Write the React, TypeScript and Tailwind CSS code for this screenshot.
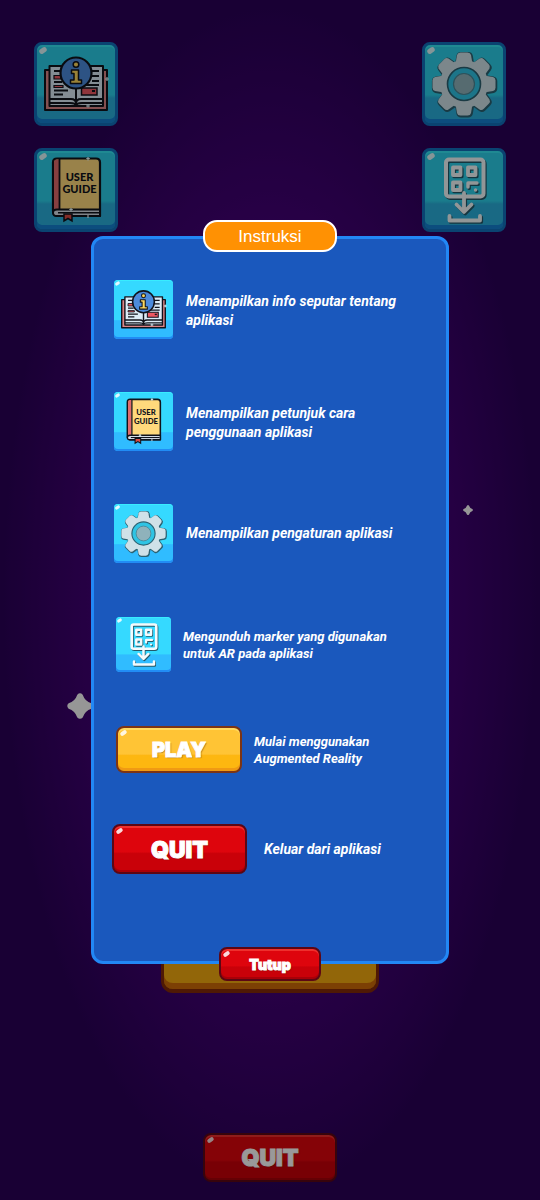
import React from "react";
import type { ReactNode } from "react";

function InfoIcon() {
  return (
    <svg viewBox="0 0 84 84" className="size-full" aria-hidden="true">
      <path d="M11 28h62v40H11z" fill="#dd8587" stroke="#10131c" strokeWidth="2" strokeLinejoin="round" />
      <path d="M15.500 24H37q5 0 5 4 0-4 5-4h22v40H15.500z" fill="#dcecf7" stroke="#10131c" strokeWidth="2" strokeLinejoin="round" />
      <path d="M15.500 57H37q5 0 5 4.500 0-4.500 5-4.500h22M15.500 61H36q6 0 6 3 0-3 6-3h21M42 30v34" fill="none" stroke="#10131c" strokeWidth="2" />
      <path d="M20 29h9M20 40h8M20 48.500h14M20 52.500h9M56 29h9M58 34h7M58 39h7M46 43h19" stroke="#10131c" strokeWidth="1.800" />
      <path d="M20 33.500h7v3.500h-7zM20 43.500h9v2h-9z" fill="#ee5963" stroke="#10131c" strokeWidth="1.200" />
      <path d="M47.500 46h15.500v7H47.500z" fill="#ee5963" stroke="#10131c" strokeWidth="1.500" />
      <path d="M58 48h3v2h-3z" fill="#10131c" />
      <circle cx="42" cy="31" r="15.500" fill="#4c8bdc" stroke="#10131c" strokeWidth="2.200" />
      <path d="M51 20a14 14 0 0 1-15 24 14 14 0 0 0 15-24z" fill="#3c72c4" />
      <circle cx="42" cy="22.500" r="2.800" fill="#ffd95c" stroke="#10131c" strokeWidth="1.500" />
      <path d="M37.500 28h7v10h3v3.500h-11V38h3.500v-6.500h-2.500z" fill="#ffd95c" stroke="#10131c" strokeWidth="1.500" strokeLinejoin="round" />
      <path d="M73 35v4M71 37h4M54 62v3.500M52 64h4" stroke="#dff8ff" strokeWidth="1.200" />
    </svg>
  );
}

function GuideIcon() {
  return (
    <svg viewBox="0 0 84 84" className="size-full" aria-hidden="true">
      <path d="M23 10.500h39q4 0 4 4V68H23q-4-1-4-5V14.500q0-4 4-4z" fill="#ffd97c" stroke="#10131c" strokeWidth="2.200" strokeLinejoin="round" />
      <path d="M20 14.500q0-3 3-3h2V63h-5z" fill="#e06a6c" />
      <path d="M25.500 10.500V62" stroke="#10131c" strokeWidth="1.800" />
      <path d="M66 61.500H23q-4 0-4 3.300t4 3.200h43z" fill="#d5dce6" stroke="#10131c" strokeWidth="2" strokeLinejoin="round" />
      <path d="M24 64.800h41" stroke="#10131c" strokeWidth="1.500" />
      <path d="M30 66h8v7l-4-2.500-4 2.500z" fill="#dc4a44" stroke="#10131c" strokeWidth="1.500" />
      <path d="M54 9v3.500M52.300 10.500h3.500M37 60v3.500M35.300 61.500h3.500M54 67v3" stroke="#e8fbff" strokeWidth="1.200" />
      <text x="45.500" y="33" textAnchor="middle" fontFamily="Lato, sans-serif" fontWeight="900" fontSize="11" fill="#10131c">USER</text>
      <text x="45.500" y="45" textAnchor="middle" fontFamily="Lato, sans-serif" fontWeight="900" fontSize="11" fill="#10131c">GUIDE</text>
    </svg>
  );
}

const TEETH = [0, 45, 90, 135, 180, 225, 270, 315];
const TOOTH = "M33.500 22l1.500-9q.6-2.500 3.500-2.500h7q2.900 0 3.500 2.500l1.500 9z";

function GearIcon() {
  return (
    <svg viewBox="0 0 84 84" className="size-full" aria-hidden="true">
      <g transform="translate(0.600 0.800)" fill="#2c6272" stroke="#2c6272" strokeWidth="2.400">
        <circle cx="42" cy="42" r="23" />
        {TEETH.map((a) => <path key={a} d={TOOTH} transform={`rotate(${a} 42 42)`} />)}
      </g>
      <g fill="#cfe1e8">
        <circle cx="42" cy="42" r="24" />
        {TEETH.map((a) => <path key={a} d={TOOTH} transform={`rotate(${a} 42 42)`} />)}
      </g>
      <circle cx="42" cy="42" r="16.500" fill="#2fc4e4" stroke="#2c6272" strokeWidth="1.600" />
      <circle cx="42" cy="42" r="10.500" fill="#8fb2bb" stroke="#4b8796" strokeWidth="1.200" />
    </svg>
  );
}

function QrGlyph() {
  return (
    <>
      <rect x="24" y="11.500" width="37.500" height="37" rx="3" strokeWidth="4" />
      <path d="M31 19.500h7.500v7.500H31zM46 19.500h7.500v7.500H46zM31 34.500h7.500v7.500H31z" strokeWidth="3.800" />
      <path d="M46 39v-4h9M53.500 42h.1" strokeWidth="3.400" />
      <path d="M42 45v18M34.500 56.500l7.500 7.500 7.500-7.500" strokeWidth="3.800" />
      <path d="M27.500 68v4.500H58V68" strokeWidth="3.800" />
    </>
  );
}

function QrIcon() {
  return (
    <svg viewBox="0 0 84 84" className="size-full" aria-hidden="true" fill="none" strokeLinecap="round" strokeLinejoin="round">
      <g stroke="#24596a" transform="translate(1.200 1.400)"><QrGlyph /></g>
      <g stroke="#f4fafc"><QrGlyph /></g>
    </svg>
  );
}

function Gloss({ className }: { className: string }) {
  return <span className={`absolute -rotate-[35deg] rounded-full bg-white/85 ${className}`} />;
}

function MenuTile({ label, children }: { label: string; children: ReactNode }) {
  return (
    <button
      type="button"
      aria-label={label}
      className="relative size-[84px] rounded-lg border-3 border-[#1270bd] bg-linear-to-b from-[#2ccfe9] from-64% to-[#2ab0dc] to-68% shadow-[inset_0_-4px_0_#1480d2,inset_0_2px_0_#35e4f4]"
    >
      <Gloss className="left-[2px] top-[3px] h-[5px] w-2" />
      <span className="absolute -inset-[3px]">{children}</span>
    </button>
  );
}

function PanelTile({ small = false, children }: { small?: boolean; children: ReactNode }) {
  return (
    <span
      className={`relative block shrink-0 rounded-sm bg-linear-to-b from-[#35d9ff] from-67% to-[#30bcff] to-69% shadow-[inset_0_-2px_0_#218cf5,inset_0_1px_0_#38ecff] ${small ? "size-[55px]" : "size-[59px]"}`}
    >
      <Gloss className="left-px top-[2px] h-[3px] w-[5px]" />
      {children}
    </span>
  );
}

const RED = "border-[#5c0714] bg-linear-to-b from-[#de050d] from-56% to-[#c90109] to-60% shadow-[inset_0_2px_0_#ee302d,inset_0_-2px_0_#a90008]";
const YELLOW = "border-[#7c3414] bg-linear-to-b from-[#ffc435] from-60% to-[#fdb710] to-64% shadow-[inset_0_2px_0_#ffdb62,inset_0_-3px_0_#f09a13]";

function GameButton({ tone, className, children }: { tone: "red" | "yellow"; className: string; children: ReactNode }) {
  return (
    <button
      type="button"
      className={`relative shrink-0 rounded-lg border-2 pt-0.5 text-center font-['Inter',sans-serif] font-black text-white ${tone === "red" ? RED : YELLOW} ${className}`}
    >
      <Gloss className="left-[2px] top-[3px] h-1 w-[7px]" />
      <span className="[-webkit-text-stroke:1px_white] [text-shadow:1px_1px_1px_#55200088]">{children}</span>
    </button>
  );
}

function Row({ className, textClass, text, children }: { className: string; textClass: string; text: string; children: ReactNode }) {
  return (
    <li className={`flex items-center ${className}`}>
      {children}
      <p className={`whitespace-pre-line font-['Roboto',sans-serif] font-bold italic text-white ${textClass}`}>{text}</p>
    </li>
  );
}

function Star({ className }: { className: string }) {
  return (
    <svg viewBox="0 0 24 24" className={`absolute fill-[#fbfbfb] ${className}`} aria-hidden="true">
      <path d="M9.500 1.500q2.500-2.500 5 0 2 6 8 8 2.500 2.500 0 5-6 2-8 8-2.500 2.500-5 0-2-6-8-8-2.500-2.500 0-5 6-2 8-8z" />
    </svg>
  );
}

export default function App() {
  return (
    <div className="relative min-h-screen overflow-hidden bg-[radial-gradient(farthest-side,#4e0084,#48007c_55%,#2a0057)] font-['Liberation_Sans',sans-serif]">
      <Star className="left-[67px] top-[693px] size-[26px]" />
      <Star className="left-[463px] top-[505px] size-[10px]" />
      <main className="flex min-h-screen flex-col items-center pb-[18px] pt-[42px]">
        <nav className="flex w-full justify-between px-[34px]">
          <div className="flex flex-col gap-[22px]">
            <MenuTile label="Info"><InfoIcon /></MenuTile>
            <MenuTile label="User guide"><GuideIcon /></MenuTile>
          </div>
          <div className="flex flex-col gap-[22px]">
            <MenuTile label="Pengaturan"><GearIcon /></MenuTile>
            <MenuTile label="Unduh marker"><QrIcon /></MenuTile>
          </div>
        </nav>
        <button
          type="button"
          aria-label="Play"
          className="mt-auto h-[72px] w-[218px] rounded-xl border-3 border-b-4 border-[#842a08] bg-[#f4ab10] shadow-[inset_0_-6px_0_#cf6c08]"
        />
        <GameButton tone="red" className="mt-[140px] h-[49px] w-[134px] text-[23px]">QUIT</GameButton>
      </main>

      <div className="absolute inset-0 flex items-center bg-black/40 px-[91px]">
        <section role="dialog" aria-labelledby="panel-title" className="relative w-full rounded-xl border-3 border-[#2287f5] bg-[#1a58bd] pb-[87px] pt-[39px]">
          <h1
            id="panel-title"
            className="absolute -top-[19px] left-1/2 h-8 w-[134px] -translate-x-1/2 rounded-[14px] border-2 border-white bg-[#ff9103] text-center text-[17px] leading-[30px] text-white"
          >
            Instruksi
          </h1>
          <ul className="flex flex-col gap-[50px]">
            <Row className="h-[62px] gap-[13px] px-5" textClass="pt-1 text-sm leading-[19px]" text={"Menampilkan info seputar tentang\naplikasi"}>
              <PanelTile><InfoIcon /></PanelTile>
            </Row>
            <Row className="h-[62px] gap-[13px] px-5" textClass="pt-1 text-sm leading-[19px]" text={"Menampilkan petunjuk cara\npenggunaan aplikasi"}>
              <PanelTile><GuideIcon /></PanelTile>
            </Row>
            <Row className="h-[62px] gap-[13px] px-5" textClass="text-sm leading-[19px]" text="Menampilkan pengaturan aplikasi">
              <PanelTile><GearIcon /></PanelTile>
            </Row>
            <Row className="h-[60px] gap-3 px-[22px]" textClass="pt-0.5 text-[13px] leading-[17px]" text={"Mengunduh marker yang digunakan\nuntuk AR pada aplikasi"}>
              <PanelTile small><QrIcon /></PanelTile>
            </Row>
            <Row className="h-[50px] gap-3 px-[22px]" textClass="pt-0.5 text-[13px] leading-[17px]" text={"Mulai menggunakan\nAugmented Reality"}>
              <GameButton tone="yellow" className="h-[47px] w-[126px] text-xl">PLAY</GameButton>
            </Row>
            <Row className="h-[50px] gap-[17px] px-[18px]" textClass="text-sm leading-[19px]" text="Keluar dari aplikasi">
              <GameButton tone="red" className="h-[50px] w-[135px] text-[23px]">QUIT</GameButton>
            </Row>
          </ul>
          <div className="absolute -bottom-5 left-1/2 flex -translate-x-1/2">
            <GameButton tone="red" className="h-[34px] w-[102px] text-sm">Tutup</GameButton>
          </div>
        </section>
      </div>
    </div>
  );
}
